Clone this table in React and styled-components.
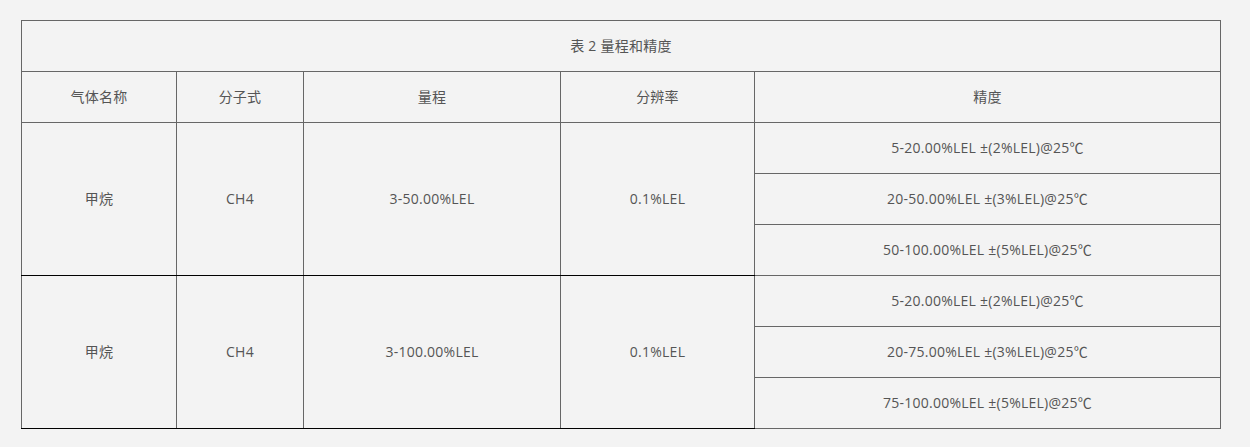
import React from 'react';
import styled, { createGlobalStyle } from 'styled-components';

const GlobalStyle = createGlobalStyle`
  html, body {
    margin: 0;
    padding: 0;
    background: #f3f3f3;
  }
`;

const Page = styled.div`
  padding: 20px 0 0 21px;
  font-family: "Open Sans", "Noto Sans CJK SC", sans-serif;
  font-size: 14px;
  letter-spacing: 0.25px;
  color: #555;
`;

const Table = styled.table`
  width: 1200px;
  border-collapse: collapse;
  table-layout: fixed;
`;

const Cell = styled.td`
  height: 50px;
  padding: 0;
  text-align: center;
  vertical-align: middle;
  border: 1px solid #666;
  border-bottom-color: ${props => (props.dark ? '#000' : '#666')};
  line-height: 20px;
`;

const rows = [
  {
    name: '甲烷',
    formula: 'CH4',
    range: '3-50.00%LEL',
    res: '0.1%LEL',
    acc: [
      '5-20.00%LEL ±(2%LEL)@25℃',
      '20-50.00%LEL ±(3%LEL)@25℃',
      '50-100.00%LEL ±(5%LEL)@25℃',
    ],
  },
  {
    name: '甲烷',
    formula: 'CH4',
    range: '3-100.00%LEL',
    res: '0.1%LEL',
    acc: [
      '5-20.00%LEL ±(2%LEL)@25℃',
      '20-75.00%LEL ±(3%LEL)@25℃',
      '75-100.00%LEL ±(5%LEL)@25℃',
    ],
  },
];

export default function App() {
  return (
    <Page>
      <GlobalStyle />
      <Table>
        <colgroup>
          <col style={{ width: 155 }} />
          <col style={{ width: 127 }} />
          <col style={{ width: 257 }} />
          <col style={{ width: 194 }} />
          <col />
        </colgroup>
        <tbody>
          <tr>
            <Cell colSpan={5}>表 2 量程和精度</Cell>
          </tr>
          <tr>
            <Cell>气体名称</Cell>
            <Cell>分子式</Cell>
            <Cell>量程</Cell>
            <Cell>分辨率</Cell>
            <Cell>精度</Cell>
          </tr>
          {rows.map((r, i) =>
            r.acc.map((a, j) => (
              <tr key={`${i}-${j}`}>
                {j === 0 && (
                  <>
                    <Cell rowSpan={3} dark>{r.name}</Cell>
                    <Cell rowSpan={3} dark>{r.formula}</Cell>
                    <Cell rowSpan={3} dark>{r.range}</Cell>
                    <Cell rowSpan={3} dark>{r.res}</Cell>
                  </>
                )}
                <Cell>{a}</Cell>
              </tr>
            ))
          )}
        </tbody>
      </Table>
    </Page>
  );
}
